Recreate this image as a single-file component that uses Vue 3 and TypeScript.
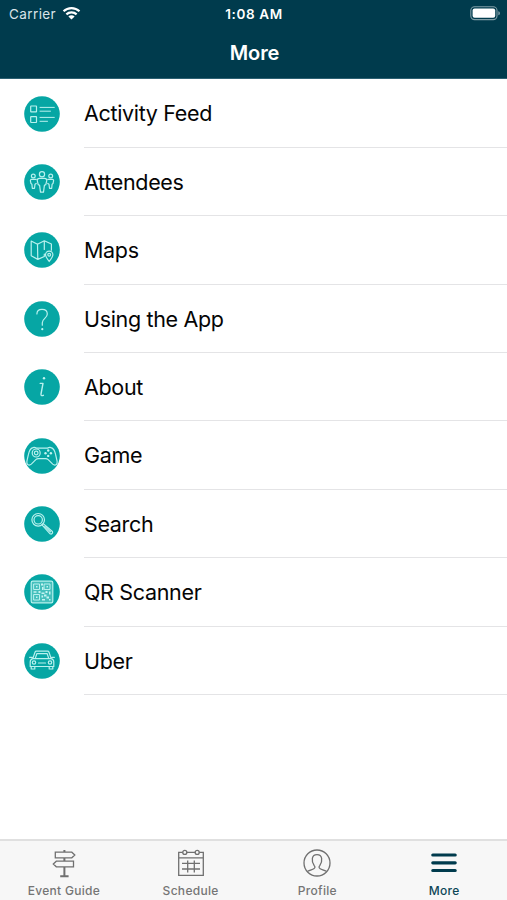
<script setup lang="ts">
interface MenuItem {
  id: string
  label: string
}

const items: MenuItem[] = [
  { id: 'feed', label: 'Activity Feed' },
  { id: 'attendees', label: 'Attendees' },
  { id: 'maps', label: 'Maps' },
  { id: 'help', label: 'Using the App' },
  { id: 'about', label: 'About' },
  { id: 'game', label: 'Game' },
  { id: 'search', label: 'Search' },
  { id: 'qr', label: 'QR Scanner' },
  { id: 'uber', label: 'Uber' },
]

const tabs: MenuItem[] = [
  { id: 'guide', label: 'Event Guide' },
  { id: 'schedule', label: 'Schedule' },
  { id: 'profile', label: 'Profile' },
  { id: 'more', label: 'More' },
]
</script>

<template>
  <div class="screen">
    <header class="header">
      <div class="status">
        <div class="carrier">
          <span>Carrier</span>
          <svg class="wifi" viewBox="0 0 20 15">
            <path d="M1.6 5.6C6.3 1 13.7 1 18.4 5.6" />
            <path d="M4.6 8.8C7.6 5.9 12.4 5.9 15.4 8.8" />
            <path class="solid" d="M10 14.3 6.7 11C8.5 9.3 11.5 9.3 13.3 11Z" />
          </svg>
        </div>
        <div class="clock">1:08 AM</div>
        <div class="power">
          <svg class="battery" viewBox="0 0 31 15">
            <rect class="shell" x=".8" y=".8" width="26.2" height="12.8" rx="3.8" />
            <rect class="charge" x="2.6" y="2.6" width="22.6" height="9.2" rx="2" />
            <path class="cap" d="M28.3 5.2C30.5 6 30.5 8.5 28.3 9.3Z" />
          </svg>
        </div>
      </div>
      <h1 class="title">More</h1>
    </header>

    <main class="list">
      <div v-for="item in items" :key="item.id" class="row">
        <svg class="icon" viewBox="0 0 36 36">
          <circle class="disc" cx="18" cy="18" r="17.8" />
          <g v-if="item.id === 'feed'">
            <rect x="6.7" y="10" width="5.8" height="5.8" rx=".4" />
            <rect x="6.7" y="20.7" width="5.8" height="5.8" rx=".4" />
            <path class="thin" d="M16 11.4H30.3M16 15.2H26.5M16 21.4H30.3M16 25.3H23.5" />
          </g>
          <g v-else-if="item.id === 'attendees'">
            <circle cx="18" cy="10.2" r="2.6" />
            <path d="M15.3 14.3H20.7C22 14.3 22.8 15.1 22.8 16.4L21.8 20.6 20.4 21.3 19.5 28.2H16.5L15.6 21.3 14.2 20.6 13.2 16.4C13.2 15.1 14 14.3 15.3 14.3Z" />
            <circle cx="9.3" cy="12" r="1.9" />
            <circle cx="26.7" cy="12" r="1.9" />
            <path d="M12.2 15.4H7.6C6.7 15.4 6.3 16 6.4 16.8L7 19.6 7.9 20.2 8.3 24.3H10.5L11 20.2 12.2 19.4" />
            <path d="M23.8 15.4H28.4C29.3 15.4 29.7 16 29.6 16.8L29 19.6 28.1 20.2 27.7 24.3H25.5L25 20.2 23.8 19.4" />
          </g>
          <g v-else-if="item.id === 'maps'">
            <path d="M20.3 24.5 13.8 27.4 7.2 23.8V9L13.5 12.2 20.3 8.8 27.4 12V18.2M13.5 12.2 13.8 27.4M20.3 8.8V17.5M20.3 22V24.5" />
            <path d="M25.2 29.5C23 26.7 21.5 24.8 21.5 22.8A3.7 3.7 0 0 1 28.9 22.8C28.9 24.8 27.4 26.7 25.2 29.5Z" />
            <circle cx="25.2" cy="22.8" r="1.4" />
          </g>
          <g v-else-if="item.id === 'help'">
            <path d="M12.9 13C12.9 10.2 15 8.4 18 8.4C21.2 8.4 23.3 10.3 23.3 13C23.3 17.4 18.3 17.4 18.3 21.7V24.2" />
            <circle class="dot" cx="18.3" cy="28.2" r="1.1" />
          </g>
          <g v-else-if="item.id === 'about'">
            <circle class="dot" cx="20" cy="9.2" r="1.2" />
            <path class="bold" d="M16.2 14.4H19L17 25C16.8 26.5 17.5 27.1 19.4 26.3" />
          </g>
          <g v-else-if="item.id === 'game'">
            <path d="M9 9.6C10.2 9 11.4 9.3 12.5 10.2H23.5C24.6 9.3 25.8 9 27 9.6C29.6 10.4 30.9 13.2 31.5 16.2L33.1 23.1C33.8 26.8 30.9 28.1 28.7 26.1L24.2 21.6C23.3 20.8 22.7 20.6 21.5 20.6H14.5C13.3 20.6 12.7 20.8 11.8 21.6L7.3 26.1C5.1 28.1 2.2 26.8 2.9 23.1L4.5 16.2C5.1 13.2 6.4 10.4 9 9.6Z" />
            <circle cx="12.2" cy="15" r="4" />
            <circle cx="12.2" cy="15" r="1.8" />
            <circle class="dot" cx="24.2" cy="12.5" r="1.2" />
            <circle class="dot" cx="24.2" cy="17.9" r="1.2" />
            <circle class="dot" cx="21.5" cy="15.2" r="1.2" />
            <circle class="dot" cx="26.9" cy="15.2" r="1.2" />
          </g>
          <g v-else-if="item.id === 'search'">
            <circle cx="14.2" cy="13.8" r="6.3" />
            <circle cx="14.2" cy="13.8" r="4.2" />
            <path d="M18 18.8 19.2 17.6 28.4 25.5C29.2 27.1 27.6 28.6 26.1 27.8Z" />
            <path d="M20.8 20.4 26.4 25.8" />
          </g>
          <g v-else-if="item.id === 'qr'">
            <rect class="haze" x="7.2" y="7.2" width="21.6" height="21.6" rx="1.6" />
            <g class="thin">
              <rect x="10" y="10" width="5.5" height="5.5" />
              <rect x="20.5" y="10" width="5.5" height="5.5" />
              <rect x="10" y="20.5" width="5.5" height="5.5" />
            </g>
            <path class="pixels" d="M12 12h1.5v1.5H12zM22.5 12H24v1.5h-1.5zM12 22.5h1.5V24H12zM17 9.5h2v2h-2zM18 13h1.5v3H18zM9.5 17.3h3v1.4h-3zM14.5 17h2v2h-2zM17.5 18.5h3v1.6h-3zM21.5 17h2v2h-2zM25 17.5h1.5v3H25zM17.5 21.5h1.6v2h-1.6zM20 20.5h2.5v2H20zM22.5 22.5H25v2h-2.5zM18 25h3v1.5h-3zM25 25h1.5v1.5H25z" />
          </g>
          <g v-else>
            <path d="M8.8 15.6 11 9.2C11.3 8.4 11.7 8.2 12.4 8.2H23.6C24.3 8.2 24.7 8.4 25 9.2L27.2 15.6M11.2 15.6 12.8 10.7H23.2L24.8 15.6M8.8 15.6H27.2C29 16.2 29.8 17.4 29.8 19V23.5H6.2V19C6.2 17.4 7 16.2 8.8 15.6ZM5.6 14.3H8.3M27.7 14.3H30.4" />
            <path d="M7.2 23.5V26H10.8V23.5M25.2 23.5V26H28.8V23.5M14.5 20H21.5" />
            <circle cx="10" cy="19.5" r="1.7" />
            <circle cx="26" cy="19.5" r="1.7" />
          </g>
        </svg>
        <div class="label">{{ item.label }}</div>
      </div>
    </main>

    <nav class="tabs">
      <div v-for="tab in tabs" :key="tab.id" class="tab" :class="{ active: tab.id === 'more' }">
        <svg class="tab-icon" viewBox="0 0 30 30">
          <g v-if="tab.id === 'guide'">
            <path d="M6.3 4.2H22.8L25.8 7 22.8 9.8H6.3ZM24.5 13.2H7.3L4.3 16 7.3 18.8H24.5Z" />
            <path class="post" d="M15.4 2V4M15.4 10V13M15.4 19V28M11.2 28.2H19.6" />
          </g>
          <g v-else-if="tab.id === 'schedule'">
            <path d="M6.8 4.4H2.7V27.3H27.3V4.4H23.2M10.8 4.4H19.2M2.7 9.9H27.3M6 15.4H24M6 21H24M11.7 12.5V24.5M18.3 12.5V24.5" />
            <circle cx="8.8" cy="4.4" r="2" />
            <circle cx="21.2" cy="4.4" r="2" />
          </g>
          <g v-else-if="tab.id === 'profile'">
            <circle cx="15" cy="15" r="13" />
            <path d="M5.3 23.5C8.3 21.8 10 21.8 11.8 20.7C13.3 19.8 13.2 18.8 12.1 17.3C9.3 13.2 9.3 6.7 15 6.7S20.7 13.2 17.9 17.3C16.8 18.8 16.7 19.8 18.2 20.7C20 21.8 21.7 21.8 24.7 23.5" />
          </g>
          <path v-else class="bars" d="M3.8 7H26.2M3.8 14.8H26.2M3.8 22.5H26.2" />
        </svg>
        <span class="tab-label">{{ tab.label }}</span>
      </div>
    </nav>
  </div>
</template>

<style>
body {
  margin: 0;
  background: #fff;
}
</style>

<style scoped>
.screen {
  display: flex;
  flex-direction: column;
  width: 507px;
  height: 900px;
  overflow: hidden;
  background: #fff;
  font-family: Inter, 'Liberation Sans', sans-serif;
}

.header {
  box-sizing: border-box;
  height: 79.4px;
  flex: none;
  background: #003b4d;
  border-bottom: 1px solid #2c6072;
  color: #fff;
}

.status {
  display: grid;
  grid-template-columns: 1fr auto 1fr;
  align-items: center;
  height: 27px;
  padding: 0 6px 0 9px;
}

.carrier {
  display: flex;
  align-items: center;
  gap: 6px;
  color: #d9e4e8;
  font-size: 13.5px;
  letter-spacing: 0.4px;
}

.wifi {
  width: 19px;
  height: 14.3px;
  fill: none;
  stroke: #fff;
  stroke-width: 2.3;
}

.wifi .solid {
  fill: #fff;
  stroke: none;
}

.clock {
  margin-left: -2px;
  font-size: 13.5px;
  font-weight: 600;
  letter-spacing: 0.6px;
}

.power {
  display: flex;
  justify-content: flex-end;
}

.battery {
  width: 31px;
  height: 15px;
}

.shell {
  fill: none;
  stroke: #7f9da6;
  stroke-width: 1.1;
}

.charge {
  fill: #fff;
}

.cap {
  fill: #7f9da6;
}

.title {
  margin: 0;
  padding: 12.5px 0 0 2px;
  text-align: center;
  font-size: 20px;
  line-height: 27px;
  font-weight: 600;
  letter-spacing: -0.1px;
}

.list {
  flex: 1;
}

.row {
  display: flex;
  height: 68.4px;
  padding-left: 24.3px;
  align-items: center;
}

.icon {
  flex: none;
  width: 36px;
  height: 36px;
  margin-right: 23.7px;
  fill: none;
  stroke: #b9f1ee;
  stroke-width: 1.2;
  stroke-linejoin: round;
  stroke-linecap: round;
}

.disc {
  fill: #06a6a4;
  stroke: none;
}

.dot,
.pixels {
  fill: #c4f4f1;
  stroke: none;
}

.haze {
  fill: #45bfbc;
}

.thin {
  stroke-width: 1;
}

.bold {
  stroke-width: 1.4;
}

.label {
  box-sizing: border-box;
  flex: 1;
  height: 100%;
  border-bottom: 1.4px solid #e4e4e6;
  color: #050505;
  font-size: 21.5px;
  line-height: 69px;
  letter-spacing: -0.33px;
}

.tabs {
  display: grid;
  grid-template-columns: repeat(4, 1fr);
  box-sizing: border-box;
  flex: none;
  height: 61px;
  border-top: 2px solid #e0e0e0;
  background: #f7f7f7;
  color: #757575;
}

.tab {
  display: flex;
  flex-direction: column;
  align-items: center;
  padding: 7px 0 0 1px;
}

.tab-icon {
  width: 30px;
  height: 30px;
  fill: none;
  stroke: #707070;
  stroke-width: 1.3;
}

.post {
  stroke-width: 2;
}

.bars {
  stroke: #003b4d;
  stroke-width: 3.2;
  stroke-linecap: round;
}

.tab-label {
  margin-top: 5px;
  font-size: 12px;
  line-height: 16px;
  font-weight: 500;
  letter-spacing: 0.3px;
}

.active {
  color: #0d4656;
}
</style>
